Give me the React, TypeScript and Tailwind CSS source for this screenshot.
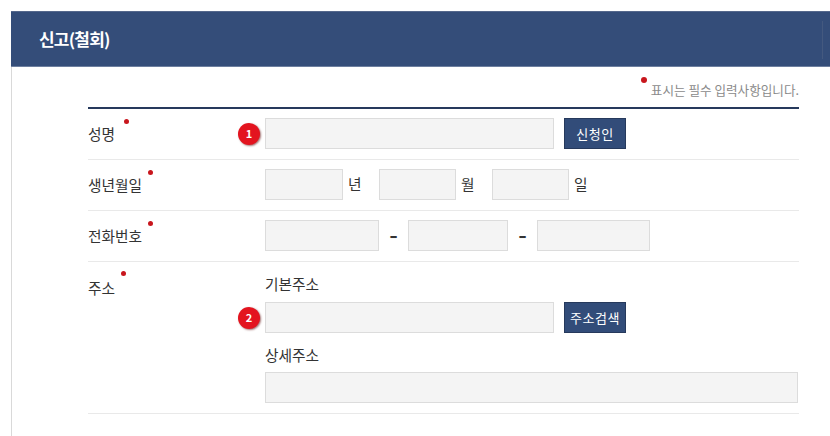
const font = { fontFamily: '"Noto Sans CJK KR", "Liberation Sans", sans-serif' };

function Inp({ w }: { w: string }) {
  return <div className={`h-[31px] shrink-0 bg-[#f4f4f4] border border-[#dcdcdc] ${w}`} />;
}

function Badge({ n }: { n: number }) {
  return (
    <div className="w-[22px] h-[22px] shrink-0 rounded-full bg-[#e3141f] text-white text-[11px] font-bold flex items-center justify-center shadow-[1px_1px_2px_rgba(90,0,0,0.55)]">
      {n}
    </div>
  );
}

function Label({ text, dot }: { text: string; dot: string }) {
  return (
    <div className="w-[151px] shrink-0 relative text-[14.7px] leading-[20px] text-[#333]">
      {text}
      <span className={`absolute w-[5px] h-[5px] rounded-full bg-[#c8161d] ${dot}`} />
    </div>
  );
}

function Btn({ text, w }: { text: string; w: string }) {
  return (
    <div className={`h-[31px] shrink-0 bg-[#324c79] border border-[#26395c] text-white text-[13px] tracking-[0.5px] flex items-center justify-center ${w}`}>
      {text}
    </div>
  );
}

export default function App() {
  return (
    <div className="w-[830px] h-[436px] overflow-hidden bg-white pt-[11px] pl-[11px]" style={font}>
      <div className="h-[425px] border-l border-[#d9d9d9]">
        <div className="relative h-[56px] -ml-px bg-[#344d79] border-t border-b border-t-[#55688c] border-b-[#6d7f9f] flex items-center pl-[28px] text-white text-[17px] font-bold tracking-[-0.8px]">
          신고(철회)
          <span className="absolute right-[7px] top-[9px] h-[38px] w-px bg-[#44597f]" />
        </div>
        <div className="pl-[76px] w-[787px]">
          <div className="h-[40px] flex justify-end items-end pb-[9px] text-[12.6px] leading-[16px] text-[#8a8a8a] relative">
            <span className="absolute w-[6px] h-[6px] rounded-full bg-[#c8161d] right-[152px] top-[10px]" />
            표시는 필수 입력사항입니다.
          </div>
          <div className="border-t-2 border-[#26395c]">
            <div className="h-[51px] pb-px flex items-center border-b border-[#e9e9e9]">
              <Label text="성명" dot="left-[36px] -top-[5px]" />
              <div className="-ml-px"><Badge n={1} /></div>
              <div className="ml-[5px]"><Inp w="w-[289px]" /></div>
              <div className="ml-[10px]"><Btn text="신청인" w="w-[62px]" /></div>
            </div>
            <div className="h-[51px] pb-px flex items-center border-b border-[#e9e9e9]">
              <Label text="생년월일" dot="left-[60px] -top-[5px]" />
              <div className="ml-[26px] flex items-center text-[14.7px] text-[#333]">
                <Inp w="w-[78px]" />
                <span className="ml-[5px] w-[31px]">년</span>
                <Inp w="w-[77px]" />
                <span className="ml-[5px] w-[31px]">월</span>
                <Inp w="w-[77px]" />
                <span className="ml-[5px]">일</span>
              </div>
            </div>
            <div className="h-[51px] pb-px flex items-center border-b border-[#e9e9e9]">
              <Label text="전화번호" dot="left-[60px] -top-[5px]" />
              <div className="ml-[26px] flex items-center text-[24px] leading-none font-medium text-[#333]">
                <Inp w="w-[114px]" />
                <span className="w-[29px] text-center pb-[3px]">-</span>
                <Inp w="w-[100px]" />
                <span className="w-[29px] text-center pb-[3px]">-</span>
                <Inp w="w-[113px]" />
              </div>
            </div>
            <div className="h-[152px] flex border-b border-[#e9e9e9]">
              <div className="pt-[16px]">
                <Label text="주소" dot="left-[33px] top-[-7px]" />
              </div>
              <div className="flex-1 text-[14.7px] text-[#333]">
                <div className="pl-[26px] pt-[12px] leading-[20px]">기본주소</div>
                <div className="flex items-center mt-[8px] -ml-px">
                  <Badge n={2} />
                  <div className="ml-[5px]"><Inp w="w-[289px]" /></div>
                  <div className="ml-[10px]"><Btn text="주소검색" w="w-[62px]" /></div>
                </div>
                <div className="pl-[26px] mt-[12px] leading-[20px]">상세주소</div>
                <div className="ml-[26px] mt-[7px]"><Inp w="w-[533px]" /></div>
              </div>
            </div>
          </div>
        </div>
      </div>
    </div>
  );
}
